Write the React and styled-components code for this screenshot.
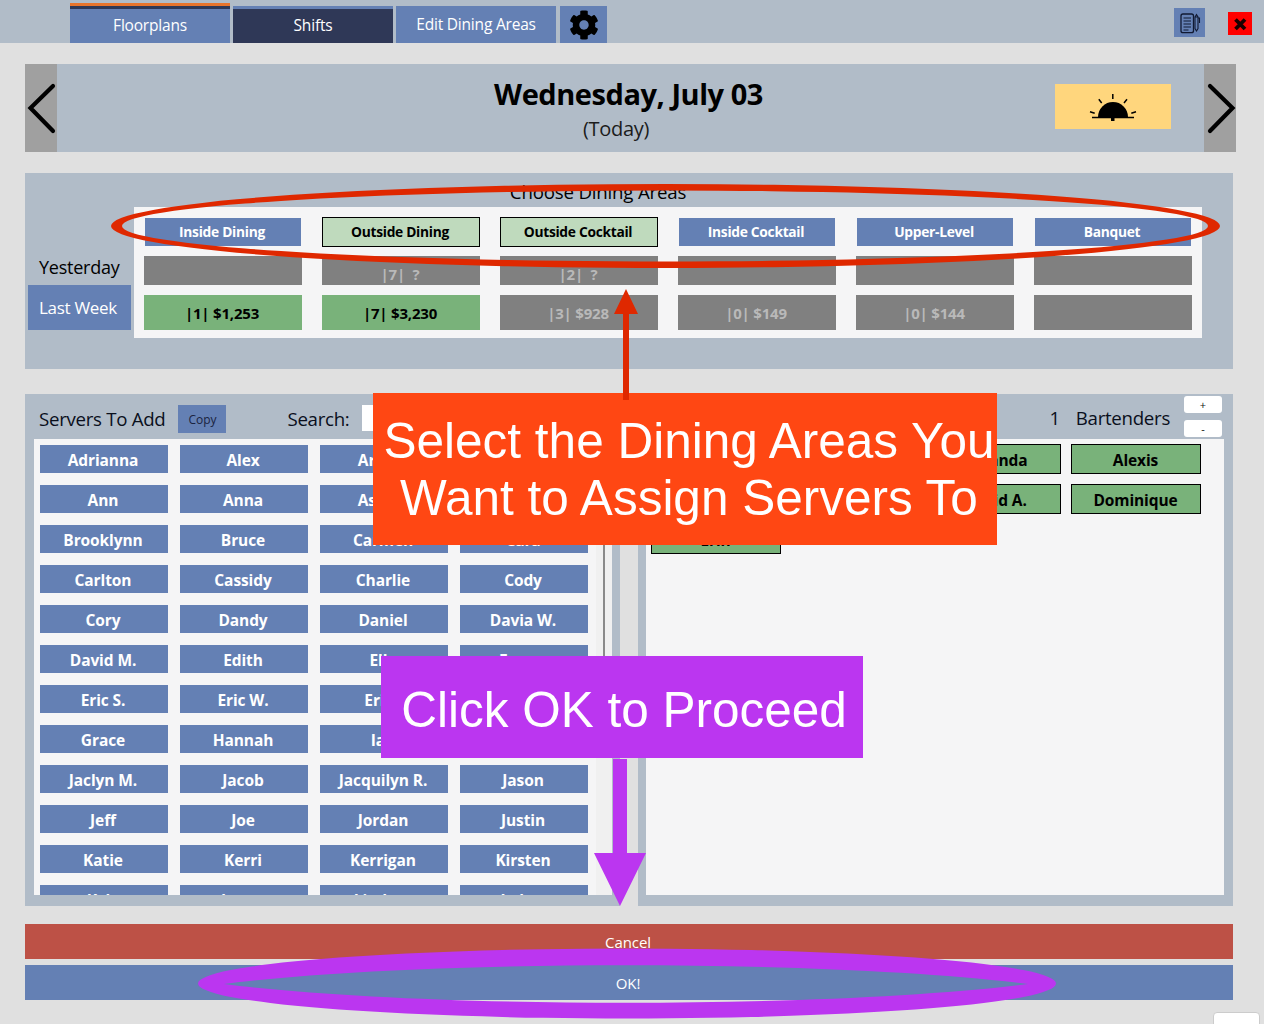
import React from "react";
import styled, { createGlobalStyle } from "styled-components";
import { FaCog } from "react-icons/fa";

const BLUE = "#6480b4";
const SLATE = "#b1bcc8";
const PANEL = "#f5f5f6";
const GREEN = "#79b27a";
const GREY = "#808080";

const Global = createGlobalStyle`
  html, body { margin: 0; padding: 0; background: #e0e0e0; }
  body { font-family: "Open Sans", "Noto Sans", sans-serif; color: #000; }
  * { box-sizing: border-box; }
`;

const Page = styled.div`
  position: relative;
  width: 1264px;
  height: 1024px;
  overflow: hidden;
  background: #e0e0e0;
`;

const TopBar = styled.header`
  height: 43px;
  background: ${SLATE};
  display: flex;
  align-items: flex-end;
  padding-left: 70px;
`;

const Tab = styled.div`
  width: 160px;
  height: ${(p) => (p.$active ? 40 : 37)}px;
  margin-right: 3px;
  display: flex;
  align-items: center;
  justify-content: center;
  color: #fff;
  font-size: 15.5px;
  font-weight: 500;
  letter-spacing: -0.2px;
  background: ${(p) => (p.$dark ? "#2f3857" : BLUE)};
  border-top: ${(p) =>
    p.$active ? "3px solid #e8742c" : p.$dark ? `3px solid ${BLUE}` : "0"};
  box-shadow: ${(p) => (p.$active ? "inset 0 3px 0 #2f3857" : "none")};
  padding-bottom: ${(p) => (p.$active ? 0 : p.$dark ? 3 : 1)}px;
`;

const GearTab = styled.div`
  width: 47px;
  height: 37px;
  margin-left: 1px;
  background: ${BLUE};
  display: flex;
  align-items: center;
  justify-content: center;
`;

const TopActions = styled.div`
  margin-left: auto;
  align-self: stretch;
  display: flex;
  align-items: flex-start;
  padding-right: 12px;
`;

const NotesButton = styled.div`
  width: 31px;
  height: 29px;
  margin-top: 8px;
  background: ${BLUE};
  display: flex;
  align-items: center;
  justify-content: center;
`;

const CloseButton = styled.div`
  width: 24px;
  height: 23px;
  margin: 12px 0 0 23px;
  background: #ff0000;
  display: flex;
  align-items: center;
  justify-content: center;
`;

const Content = styled.main`
  padding: 21px 0 0 25px;
  width: 1233px;
`;

const DateBar = styled.section`
  width: 1211px;
  height: 88px;
  background: ${SLATE};
  display: flex;
  align-items: center;
`;

const NavButton = styled.div`
  width: 32px;
  align-self: stretch;
  background: #a0a0a0;
  display: flex;
  align-items: center;
  justify-content: center;
`;

const DateText = styled.div`
  flex: 1;
  padding-left: 145px;
  display: flex;
  flex-direction: column;
  align-items: center;
`;

const DateTitle = styled.div`
  font-size: 29px;
  font-weight: 700;
  line-height: 38px;
  letter-spacing: -0.45px;
`;

const DateSub = styled.div`
  font-size: 20px;
  line-height: 26px;
  margin: 3px 25px 0 0;
  letter-spacing: -0.3px;
  color: #1c1c1c;
`;

const ShiftButton = styled.div`
  width: 116px;
  height: 45px;
  margin: 0 33px 3px 0;
  background: #ffd67d;
  display: flex;
  align-items: center;
  justify-content: center;
`;

const AreasSection = styled.section`
  height: 196px;
  margin-top: 21px;
  background: ${SLATE};
`;

const AreasTitle = styled.div`
  height: 34px;
  width: 1146px;
  text-align: center;
  font-size: 18.7px;
  line-height: 38px;
  letter-spacing: -0.2px;
`;

const AreasBody = styled.div`
  display: flex;
`;

const HistoryLabels = styled.div`
  width: 109px;
  padding: 49px 0 0 3px;
`;

const YesterdayLabel = styled.div`
  height: 29px;
  padding: 0 0 8px 11px;
  display: flex;
  align-items: center;
  font-size: 18px;
  letter-spacing: -0.25px;
`;

const LastWeekButton = styled.div`
  width: 103px;
  height: 45px;
  padding-left: 11px;
  background: ${BLUE};
  color: #fff;
  display: flex;
  align-items: center;
  font-size: 17px;
  letter-spacing: -0.3px;
`;

const AreasGrid = styled.div`
  width: 1068px;
  height: 131px;
  background: ${PANEL};
  padding: 10px 10px 0;
  display: grid;
  grid-template-columns: repeat(6, 158px);
  grid-template-rows: 39px 39px 35px;
  column-gap: 20px;
`;

const AreaHeader = styled.div`
  height: 30px;
  border: 1px solid ${(p) => (p.$selected ? "#000" : "transparent")};
  background: ${(p) => (p.$selected ? "#bfdabd" : BLUE)};
  background-clip: padding-box;
  color: ${(p) => (p.$selected ? "#000" : "#fff")};
  font-size: 13.8px;
  font-weight: 700;
  letter-spacing: -0.3px;
  display: flex;
  align-items: center;
  justify-content: center;
  padding: 0 2px 2px 0;
`;

const AreaCell = styled.div`
  height: ${(p) => (p.$low ? 29 : 35)}px;
  background: ${(p) => (p.$good ? GREEN : GREY)};
  color: ${(p) => (p.$good ? "#000" : "#b9b9b9")};
  font-size: 15px;
  font-weight: 700;
  letter-spacing: -0.2px;
  white-space: pre;
  display: flex;
  align-items: ${(p) => (p.$low ? "flex-end" : "center")};
  justify-content: center;
  padding-right: 2px;
  line-height: 22px;
`;

const StaffRow = styled.section`
  margin-top: 25px;
  display: flex;
  gap: 18px;
  height: 512px;
`;

const StaffPanel = styled.div`
  width: 595px;
  background: ${SLATE};
  display: flex;
  flex-direction: column;
  padding: 0 ${(p) => (p.$right ? 9 : 8)}px 11px ${(p) => (p.$right ? 8 : 9)}px;
`;

const StaffHeader = styled.div`
  height: 45px;
  flex: none;
  display: flex;
  align-items: center;
  padding-top: ${(p) => (p.$right ? 0 : 5)}px;
  padding-left: ${(p) => (p.$right ? 0 : 5)}px;
  justify-content: ${(p) => (p.$right ? "flex-end" : "flex-start")};
`;

const HeaderLabel = styled.div`
  font-size: 18.7px;
  letter-spacing: -0.3px;
  white-space: nowrap;
  color: #0a0f1c;
  margin-top: -2px;
`;

const CountLabel = styled(HeaderLabel)`
  margin-right: 16px;
  padding-top: 3px;
`;

const RoleLabel = styled(HeaderLabel)`
  padding-top: 3px;
  margin-right: 14px;
`;

const CopyButton = styled.div`
  width: 48px;
  height: 28px;
  margin-left: 13px;
  background: ${BLUE};
  color: #1a2340;
  font-size: 12px;
  display: flex;
  align-items: center;
  justify-content: center;
`;

const SearchLabel = styled(HeaderLabel)`
  margin-left: 61px;
`;

const SearchInput = styled.div`
  width: 200px;
  height: 26px;
  margin: -2px 0 0 13px;
  background: #fff;
`;

const Stepper = styled.div`
  display: flex;
  flex-direction: column;
  gap: 7px;
  margin-right: 2px;
`;

const StepButton = styled.div`
  width: 38px;
  height: 17px;
  border-radius: 3px;
  background: #fff;
  font-size: 11px;
  line-height: 17px;
  text-align: center;
  color: #111;
`;

const ListFrame = styled.div`
  flex: 1;
  min-height: 0;
  background: ${PANEL};
  display: flex;
  overflow: hidden;
`;

const NameGrid = styled.div`
  width: 562px;
  padding: 6px 0 0 6px;
  display: grid;
  grid-template-columns: repeat(4, 128px);
  grid-auto-rows: 28px;
  gap: 12px;
`;

const NameButton = styled.div`
  background: ${BLUE};
  color: #fff;
  font-size: 15.5px;
  font-weight: 700;
  letter-spacing: -0.1px;
  display: flex;
  align-items: center;
  justify-content: center;
  padding: 2px 2px 0 0;
`;

const ScrollTrack = styled.div`
  width: 16px;
  background: #f0f0f0;
  padding: 11px 0 0 7px;
`;

const ScrollThumb = styled.div`
  width: 2px;
  height: 240px;
  background: #8a8a8a;
`;

const AssignedGrid = styled.div`
  padding: 5px 0 0 5px;
  display: grid;
  grid-template-columns: repeat(4, 130px);
  grid-auto-rows: 30px;
  gap: 10px;
  align-content: start;
`;

const AssignedButton = styled.div`
  background: ${GREEN};
  border: 1px solid #000;
  font-size: 15.5px;
  font-weight: 700;
  letter-spacing: -0.1px;
  display: flex;
  align-items: center;
  justify-content: center;
  padding: 2px 1px 0 0;
`;

const ActionBar = styled.div`
  margin-top: ${(p) => p.$gap}px;
  height: 35px;
  background: ${(p) => p.$color};
  color: #fff;
  font-size: 15px;
  letter-spacing: -0.1px;
  display: flex;
  align-items: ${(p) => (p.$low ? "flex-end" : "center")};
  justify-content: center;
  padding: ${(p) => (p.$low ? "0 2px 7px 0" : "1px 2px 0 0")};
`;

const CornerButton = styled.div`
  position: absolute;
  left: 1213px;
  top: 1012px;
  width: 47px;
  height: 30px;
  background: #fff;
  border: 1px solid #ccc;
  border-radius: 4px;
`;

const Callout = styled.div`
  position: absolute;
  left: ${(p) => p.$x}px;
  top: ${(p) => p.$y}px;
  width: ${(p) => p.$w}px;
  height: ${(p) => p.$h}px;
  background: ${(p) => p.$color};
  color: #fff;
  font-family: "Liberation Sans", Arial, sans-serif;
  font-size: 49.5px;
  line-height: 57px;
  text-align: center;
  white-space: nowrap;
  display: flex;
  flex-direction: column;
  align-items: center;
  justify-content: center;
  padding: ${(p) => p.$pad};
`;

const Annotations = styled.svg`
  position: absolute;
  left: 0;
  top: 0;
  width: 1264px;
  height: 1024px;
  pointer-events: none;
`;

const ellipse = (cx, cy, rx, ry) =>
  `M${cx - rx},${cy} a${rx},${ry} 0 1,0 ${2 * rx},0 a${rx},${ry} 0 1,0 ${-2 * rx},0 Z`;

const areas = [
  { name: "Inside Dining", y: "", w: "|1| $1,253", good: true },
  { name: "Outside Dining", selected: true, y: "|7|  ?", w: "|7| $3,230", good: true },
  { name: "Outside Cocktail", selected: true, y: "|2|  ?", w: "|3| $928" },
  { name: "Inside Cocktail", y: "", w: "|0| $149" },
  { name: "Upper-Level", y: "", w: "|0| $144" },
  { name: "Banquet", y: "", w: "" },
];

const servers = [
  "Adrianna", "Alex", "Arlene", "Andrea",
  "Ann", "Anna", "Ashley", "Bella",
  "Brooklynn", "Bruce", "Carmen", "Cara",
  "Carlton", "Cassidy", "Charlie", "Cody",
  "Cory", "Dandy", "Daniel", "Davia W.",
  "David M.", "Edith", "Ella", "Emma",
  "Eric S.", "Eric W.", "Erica", "Gabe",
  "Grace", "Hannah", "Ian", "Jack",
  "Jaclyn M.", "Jacob", "Jacquilyn R.", "Jason",
  "Jeff", "Joe", "Jordan", "Justin",
  "Katie", "Kerri", "Kerrigan", "Kirsten",
  "Kyle", "Laura", "Lindsey", "Lukas",
];

const assigned = ["Aaron", "Alan", "Amanda", "Alexis", "Brian", "Carla", "David A.", "Dominique", "Erin"];

const Chevron = ({ dir }) => (
  <svg width="32" height="88" viewBox="0 0 32 88" aria-hidden="true">
    <path
      d={dir === "left" ? "M28 22 L5.5 44 L28 67" : "M6 22 L28.5 44 L6 67"}
      fill="none"
      stroke="#000"
      strokeWidth="4.2"
      strokeLinecap="round"
      strokeLinejoin="miter"
    />
  </svg>
);

const SunIcon = () => (
  <svg width="50" height="30" viewBox="0 0 50 30" aria-hidden="true">
    <path d="M10 25 A15 15 0 0 1 40 25 Z" fill="#000" />
    <path d="M4 25.6 H46" stroke="#000" strokeWidth="1.5" />
    <path d="M23 26 h3.5 v3 h-3.5 z" fill="#000" />
    <path
      d="M24.8 2 V7 M10.8 7.3 L13.7 11 M39 7.3 L36 11 M2 19.7 L6.7 21.3 M48 19.7 L43.3 21.3"
      stroke="#000"
      strokeWidth="1.5"
      fill="none"
    />
  </svg>
);

const NotesIcon = () => (
  <svg width="24" height="24" viewBox="0 0 24 24" aria-hidden="true">
    <rect x="3" y="3" width="12.5" height="18.7" rx="2" fill="none" stroke="#111a33" strokeWidth="1.3" />
    <path d="M5.5 7 H13 M5.5 10 H13 M5.5 13 H13 M5.5 16 H13 M5.5 19 H10.5" stroke="#111a33" strokeWidth="1.2" />
    <path d="M17 6 V17.5 L18.5 20 L20 17.5 V6 Z M17 6 L18.5 3.5 L20 6 M20 7 H21.5 V12" fill="none" stroke="#111a33" strokeWidth="1.1" />
  </svg>
);

const CloseIcon = () => (
  <svg width="24" height="23" viewBox="0 0 24 23" aria-hidden="true">
    <path d="M7.5 7.5 L17 17 M17 7.5 L7.5 17" stroke="#1a0000" strokeWidth="3.8" />
  </svg>
);

export default function App() {
  return (
    <Page>
      <Global />
      <TopBar>
        <Tab $active>Floorplans</Tab>
        <Tab $dark>Shifts</Tab>
        <Tab>Edit Dining Areas</Tab>
        <GearTab>
          <FaCog size={30} color="#000" />
        </GearTab>
        <TopActions>
          <NotesButton>
            <NotesIcon />
          </NotesButton>
          <CloseButton>
            <CloseIcon />
          </CloseButton>
        </TopActions>
      </TopBar>

      <Content>
        <DateBar>
          <NavButton>
            <Chevron dir="left" />
          </NavButton>
          <DateText>
            <DateTitle>Wednesday, July 03</DateTitle>
            <DateSub>(Today)</DateSub>
          </DateText>
          <ShiftButton>
            <SunIcon />
          </ShiftButton>
          <NavButton>
            <Chevron dir="right" />
          </NavButton>
        </DateBar>

        <AreasSection>
          <AreasTitle>Choose Dining Areas</AreasTitle>
          <AreasBody>
            <HistoryLabels>
              <YesterdayLabel>Yesterday</YesterdayLabel>
              <LastWeekButton>Last Week</LastWeekButton>
            </HistoryLabels>
            <AreasGrid>
              {areas.map((a) => (
                <AreaHeader key={a.name} $selected={a.selected}>
                  {a.name}
                </AreaHeader>
              ))}
              {areas.map((a) => (
                <AreaCell key={a.name} $low>
                  {a.y}
                </AreaCell>
              ))}
              {areas.map((a) => (
                <AreaCell key={a.name} $good={a.good}>
                  {a.w}
                </AreaCell>
              ))}
            </AreasGrid>
          </AreasBody>
        </AreasSection>

        <StaffRow>
          <StaffPanel>
            <StaffHeader>
              <HeaderLabel>Servers To Add</HeaderLabel>
              <CopyButton>Copy</CopyButton>
              <SearchLabel>Search:</SearchLabel>
              <SearchInput />
            </StaffHeader>
            <ListFrame>
              <NameGrid>
                {servers.map((s) => (
                  <NameButton key={s}>{s}</NameButton>
                ))}
              </NameGrid>
              <ScrollTrack>
                <ScrollThumb />
              </ScrollTrack>
            </ListFrame>
          </StaffPanel>
          <StaffPanel $right>
            <StaffHeader $right>
              <CountLabel>1</CountLabel>
              <RoleLabel>Bartenders</RoleLabel>
              <Stepper>
                <StepButton>+</StepButton>
                <StepButton>-</StepButton>
              </Stepper>
            </StaffHeader>
            <ListFrame>
              <AssignedGrid>
                {assigned.map((s) => (
                  <AssignedButton key={s}>{s}</AssignedButton>
                ))}
              </AssignedGrid>
            </ListFrame>
          </StaffPanel>
        </StaffRow>

        <ActionBar $gap={18} $color="#bd5146" $low>
          Cancel
        </ActionBar>
        <ActionBar $gap={6} $color={BLUE}>
          OK!
        </ActionBar>
      </Content>

      <CornerButton />

      <Callout $x={373} $y={393} $w={624} $h={152} $color="#ff4713" $pad="0 0 0 8px">
        <div>Select the Dining Areas You</div>
        <div>Want to Assign Servers To</div>
      </Callout>
      <Callout $x={381} $y={656} $w={482} $h={102} $color="#bb36f0" $pad="4px 0 0 4px">
        Click OK to Proceed
      </Callout>

      <Annotations viewBox="0 0 1264 1024" aria-hidden="true">
        <path
          fillRule="evenodd"
          fill="#df2800"
          d={`${ellipse(665.5, 226, 554.5, 42)} ${ellipse(665, 226, 543, 35.5)}`}
        />
        <path fill="#df2800" d="M626 289 L638 314 L629 314 L629 400 L623 400 L623 314 L614 314 Z" />
        <path fill="#bb36f0" d="M613 759 H627 V853 H646 L620 906 L594 853 H613 Z" />
        <path
          fillRule="evenodd"
          fill="#bb36f0"
          d={`${ellipse(627, 983.5, 429, 35)} M224,984 C420,959 830,959 1028,984 C830,1009 420,1009 224,984 Z`}
        />
      </Annotations>
    </Page>
  );
}
